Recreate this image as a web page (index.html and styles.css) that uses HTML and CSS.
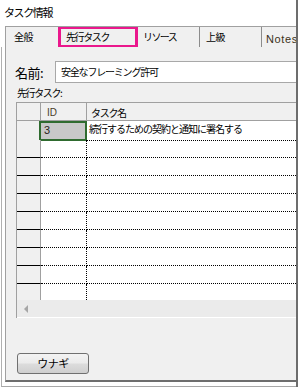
FILE: index.html
```html
<!DOCTYPE html>
<html lang="ja">
<head>
<meta charset="utf-8">
<link rel="stylesheet" href="styles.css">
</head>
<body>
<div class="dialog">
  <div class="title">タスク情報</div>
  <div class="tabs">
    <div class="tab t1">全般</div>
    <div class="tab sel">先行タスク</div>
    <div class="tab t3">リソース</div>
    <div class="tab t4">上級</div>
    <div class="tab notes">Notes</div>
  </div>
  <div class="lower">
    <div class="panel">
      <div class="name-row">
        <span class="name-label">名前:</span>
        <div class="name-input">安全なフレーミング許可</div>
      </div>
      <div class="pred-label">先行タスク:</div>
      <div class="grid">
        <div class="ghead">
          <div class="rh"></div>
          <div class="h-id">ID</div>
          <div class="h-name">タスク名</div>
        </div>
        <div class="gbody">
          <div class="row first"><div class="rh"></div><div class="c-id sel">3</div><div class="c-name">続行するための契約と通知に署名する</div></div>
          <div class="row"><div class="rh"></div><div class="c-id"></div><div class="c-name"></div></div>
          <div class="row"><div class="rh"></div><div class="c-id"></div><div class="c-name"></div></div>
          <div class="row"><div class="rh"></div><div class="c-id"></div><div class="c-name"></div></div>
          <div class="row"><div class="rh"></div><div class="c-id"></div><div class="c-name"></div></div>
          <div class="row"><div class="rh"></div><div class="c-id"></div><div class="c-name"></div></div>
          <div class="row"><div class="rh"></div><div class="c-id"></div><div class="c-name"></div></div>
          <div class="row"><div class="rh"></div><div class="c-id"></div><div class="c-name"></div></div>
          <div class="row"><div class="rh"></div><div class="c-id"></div><div class="c-name"></div></div>
          <div class="row"><div class="rh"></div><div class="c-id"></div><div class="c-name"></div></div>
        </div>
        <div class="hscroll"><span class="arrow"></span></div>
      </div>
      <div class="btn">ウナギ</div>
    </div>
  </div>
  <div class="footer"></div>
</div>
</body>
</html>
```

FILE: styles.css
```css
* { box-sizing: border-box; }
html, body { margin: 0; padding: 0; background: #fff; }
body {
  width: 298px;
  height: 387px;
  overflow: hidden;
  font-family: "Noto Sans CJK JP", "Noto Sans", sans-serif;
  color: #000;
}
.dialog {
  width: 298px;
  height: 387px;
  border-right: 2px solid #6d6d6d;
  display: flex;
  flex-direction: column;
  background: #fff;
}
.title {
  height: 26px;
  flex: none;
  padding: 5px 0 0 4px;
  font-size: 11px;
  line-height: 14px;
  letter-spacing: -1.4px;
}
.tabs {
  flex: none;
  height: 21px;
  margin-left: 5px;
  border-top: 1px solid #a0a0a0;
  border-left: 1px solid #a0a0a0;
  background: #f0f0f0;
  display: flex;
  overflow: hidden;
}
.tab {
  flex: none;
  height: 20px;
  font-size: 10px;
  line-height: 20px;
  white-space: nowrap;
  letter-spacing: -0.5px;
}
.t1 { width: 52px; padding-left: 8px; }
.sel {
  width: 80px;
  height: 22px;
  margin-top: -1px;
  border: 3px solid #ea178c;
  padding-left: 5px;
  line-height: 16px;
  letter-spacing: -1.4px;
}
.t3 { width: 62px; padding-left: 5px; border-right: 1px solid #8c8c8c; letter-spacing: -1.6px; }
.t4 { width: 62px; padding-left: 6px; border-right: 1px solid #8c8c8c; }
.notes {
  flex: 1;
  padding-left: 4px;
  font-family: "Liberation Sans", Arial, sans-serif;
  font-size: 11px;
  line-height: 24px;
  letter-spacing: 0.6px;
  color: #3a3020;
  overflow: hidden;
}
.lower {
  flex: none;
  margin-left: 1px;
  border-left: 1px solid #b0b0b0;
  padding-left: 3px;
  background: #fff;
}
.panel {
  height: 335px;
  border-left: 1px solid #a0a0a0;
  border-bottom: 2px solid #6e6e6e;
  background: #f0f0f0;
  overflow: hidden;
}
.name-row {
  margin-top: 14px;
  display: flex;
  align-items: center;
  height: 22px;
}
.name-label {
  width: 49px;
  flex: none;
  padding-left: 9px;
  font-size: 13px;
  letter-spacing: -0.5px;
}
.name-input {
  flex: 1;
  height: 22px;
  background: #fff;
  border: 1px solid #a8a8a8;
  border-right: none;
  padding-left: 5px;
  font-size: 10px;
  line-height: 20px;
  letter-spacing: -1.2px;
  white-space: nowrap;
}
.pred-label {
  margin-top: 3px;
  height: 15px;
  padding-left: 11px;
  font-size: 10px;
  line-height: 14px;
  letter-spacing: -1.4px;
}
.grid {
  margin-top: 1px;
  margin-left: 10px;
  border-left: 1px solid #a0a0a0;
  border-top: 1px solid #a0a0a0;
}
.ghead, .row {
  display: grid;
  grid-template-columns: 24px 46px 1fr;
}
.ghead {
  height: 18px;
  border-bottom: 1px solid #a0a0a0;
  font-size: 10px;
  line-height: 20px;
}
.ghead .rh { border-right: 1px solid #a0a0a0; }
.h-id {
  border-right: 1px solid #a0a0a0;
  padding-left: 6px;
  color: #4a3c28;
  font-family: "Liberation Sans", Arial, sans-serif;
}
.h-name { padding-left: 4px; letter-spacing: -1.3px; }
.gbody {
  height: 179px;
  overflow: hidden;
  background: #fff;
}
.row { height: 18px; }
.row.first { height: 19px; }
.row .rh {
  background: #f0f0f0;
  border-right: 1px solid #a0a0a0;
  border-bottom: 1px solid #000;
}
.c-id {
  border-right: 1px dotted #000;
  border-bottom: 1px dotted #000;
}
.c-id.sel {
  margin-left: -2px;
  width: 48px;
  height: 20px;
  margin-top: 0;
  border: 2px solid #2f6b2f;
  background: #c8c8c8;
  padding: 0 0 0 3px;
  font-family: "Liberation Sans", Arial, sans-serif;
  font-size: 11px;
  line-height: 15px;
  letter-spacing: 0;
  color: #2a2218;
}
.c-name {
  border-bottom: 1px dotted #000;
  padding-left: 2px;
  font-size: 10px;
  line-height: 16px;
  letter-spacing: -1px;
  white-space: nowrap;
  overflow: hidden;
}
.hscroll {
  height: 18px;
  background: #ebebeb;
  border-bottom: 1px solid #fff;
  padding: 5px 0 0 7px;
}
.arrow {
  display: block;
  width: 0;
  height: 0;
  border-top: 4px solid transparent;
  border-bottom: 4px solid transparent;
  border-right: 4px solid #a6a6a6;
}
.btn {
  margin-top: 35px;
  margin-left: 11px;
  width: 72px;
  height: 21px;
  border: 1px solid #707070;
  border-radius: 3px;
  background: linear-gradient(#f3f3f3 0%, #ebebeb 48%, #dcdcdc 52%, #cfcfcf 100%);
  text-align: center;
  font-size: 11px;
  line-height: 19px;
  letter-spacing: -0.5px;
}
.footer {
  flex: none;
  height: 5px;
  margin-left: 1px;
  border-left: 1px solid #b0b0b0;
  border-bottom: 1px solid #a8a8a8;
}
```
